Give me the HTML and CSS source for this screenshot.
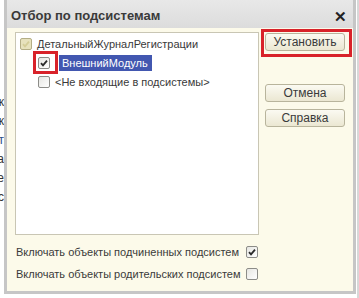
FILE: index.html
```html
<!DOCTYPE html>
<html lang="ru">
<head>
    <meta charset="UTF-8">
    <title>Отбор по подсистемам</title>
    <link rel="stylesheet" href="styles.css">
</head>
<body>
    <div class="screen">
        <!-- clipped text of the form behind the dialog -->
        <div class="behind-left">
            <span>к</span>
            <span>к</span>
            <span class="blue">т</span>
            <span>а</span>
            <span>е</span>
            <span>с</span>
        </div>

        <div class="dialog">
            <div class="title-bar">
                <h1>Отбор по подсистемам</h1>
                <span class="close">✕</span>
            </div>

            <div class="dialog-body">
                <div class="main-row">
                    <div class="tree">
                        <div class="tree-item">
                            <span class="check check-grey"><svg viewBox="0 0 10 10"><path d="M2 5.2l2 2.2L8 2.6"/></svg></span>
                            <span class="tree-text">ДетальныйЖурналРегистрации</span>
                        </div>
                        <div class="tree-item level-2">
                            <span class="check">
                                <svg viewBox="0 0 10 10"><path d="M2 5.2l2 2.2L8 2.6"/></svg>
                                <span class="mark-box mark-check"></span>
                            </span>
                            <span class="tree-text selected">ВнешнийМодуль</span>
                        </div>
                        <div class="tree-item level-2">
                            <span class="check"></span>
                            <span class="tree-text">&lt;Не входящие в подсистемы&gt;</span>
                        </div>
                    </div>

                    <div class="buttons">
                        <button class="btn">Установить<span class="mark-box mark-btn"></span></button>
                        <button class="btn btn-gap">Отмена</button>
                        <button class="btn">Справка</button>
                    </div>
                </div>

                <div class="option option-first">
                    <span>Включать объекты подчиненных подсистем</span>
                    <span class="check"><svg viewBox="0 0 10 10"><path d="M2 5.2l2 2.2L8 2.6"/></svg></span>
                </div>
                <div class="option">
                    <span>Включать объекты родительских подсистем</span>
                    <span class="check"></span>
                </div>
            </div>
        </div>

        <div class="behind-right"></div>
    </div>
</body>
</html>
```

FILE: styles.css
```css
* {
    margin: 0;
    padding: 0;
    box-sizing: border-box;
}

body {
    background: #fff;
    font-family: "Liberation Sans", Arial, sans-serif;
    font-size: 11px;
    color: #3a3a3a;
    overflow: hidden;
}

.screen {
    display: flex;
    width: 359px;
    height: 298px;
}

.behind-left {
    width: 4px;
    flex: none;
    padding-top: 93px;
    display: flex;
    flex-direction: column;
    align-items: flex-end;
    overflow: hidden;
    font-size: 12px;
    line-height: 19px;
    color: #333;
}

.behind-left .blue {
    color: #2c4f86;
}

.behind-right {
    width: 3px;
    flex: none;
    border-left: 1px solid #fff;
    background: #d8d8d8;
}

.dialog {
    width: 352px;
    height: 294px;
    flex: none;
    display: flex;
    flex-direction: column;
    border: 3px solid #c6c6c6;
    border-top: none;
    background: #fcfaea;
}

/* Title bar */
.title-bar {
    height: 28px;
    flex: none;
    display: flex;
    align-items: center;
    justify-content: space-between;
    padding: 0 6px 0 4px;
    background: linear-gradient(#e8e8e8, #dcdcdc);
}

.title-bar h1 {
    font-size: 13px;
    font-weight: bold;
    color: #3a3a3a;
    padding-top: 2px;
}

.close {
    font-size: 15px;
    font-weight: bold;
    color: #222;
    padding-top: 6px;
}

/* Body */
.dialog-body {
    flex: 1;
    display: flex;
    flex-direction: column;
    padding: 4px 0 0 8px;
}

.main-row {
    display: flex;
    gap: 6px;
}

.tree {
    width: 244px;
    height: 203px;
    background: #fff;
    border: 1px solid #c9c6b4;
    padding: 5px 0 0 4px;
    display: flex;
    flex-direction: column;
    gap: 7px;
}

.tree-item {
    display: flex;
    align-items: center;
    gap: 5px;
    height: 12px;
}

.level-2 {
    padding-left: 18px;
}

.tree-text {
    white-space: nowrap;
}

.tree-text.selected {
    background: #4257b0;
    color: #fff;
    padding: 2px 4px 2px 3px;
    margin-left: 4px;
    line-height: 12px;
}

/* Checkboxes */
.check {
    position: relative;
    width: 12px;
    height: 12px;
    flex: none;
    border: 1px solid #8c8c88;
    border-radius: 2px;
    background: linear-gradient(135deg, #e6e6e2, #fff);
    display: flex;
    align-items: center;
    justify-content: center;
}

.check svg {
    width: 10px;
    height: 10px;
}

.check path {
    fill: none;
    stroke: #2a2a2a;
    stroke-width: 1.8;
}

.check-grey {
    background: #e7e2bd;
    border-color: #b4ae86;
}

.check-grey path {
    stroke: #d4cd98;
}

/* Red highlight frames drawn over the screenshot */
.mark-box {
    position: absolute;
    border: 3px solid #d8222a;
}

.mark-check {
    left: -6px;
    top: -7px;
    width: 25px;
    height: 23px;
}

.mark-btn {
    left: -5px;
    top: -5px;
    width: 91px;
    height: 28px;
}

/* Buttons */
.buttons {
    display: flex;
    flex-direction: column;
    padding-top: 1px;
}

.btn {
    position: relative;
    width: 80px;
    height: 18px;
    border: 1px solid #b8b49c;
    border-radius: 3px;
    background: linear-gradient(#fbfaf2, #ebe7d2);
    font-family: "Liberation Sans", Arial, sans-serif;
    font-size: 12px;
    color: #3a3a3a;
    margin-bottom: 7px;
}

.btn-gap {
    margin-top: 26px;
}

/* Options under the tree */
.option {
    display: flex;
    align-items: center;
    justify-content: space-between;
    width: 243px;
    padding-left: 1px;
    height: 12px;
    margin-top: 10px;
    white-space: nowrap;
}

.option-first {
    margin-top: 11px;
}
```
